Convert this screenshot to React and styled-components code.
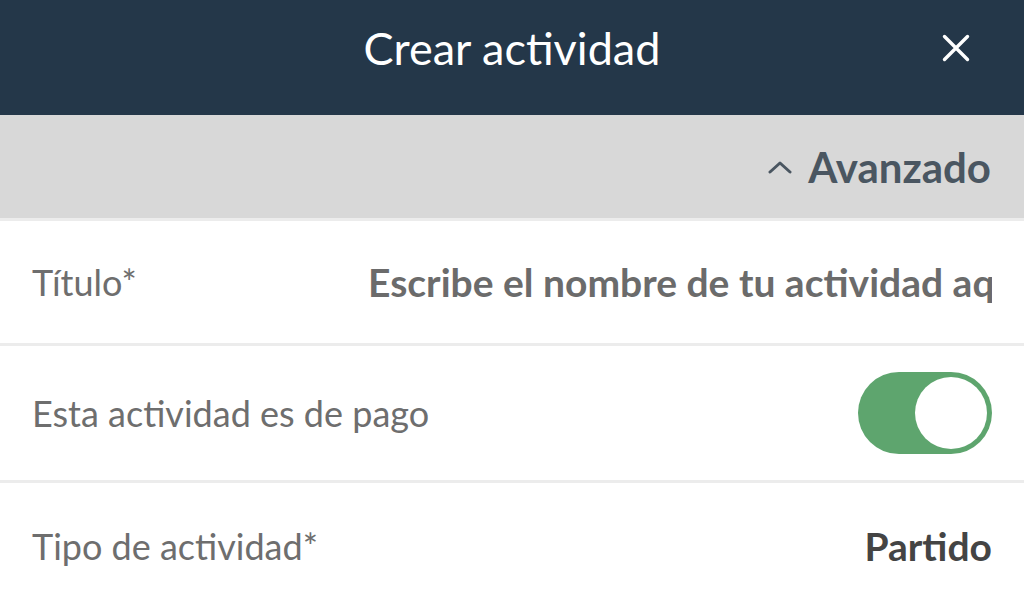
import React from 'react';
import styled, {createGlobalStyle} from 'styled-components';

const Global = createGlobalStyle`
  html, body {
    margin: 0;
    padding: 0;
    background: #ffffff;
    font-family: Lato, "Open Sans", sans-serif;
  }
`;

const Page = styled.div`
  width: 1024px;
  height: 592px;
  overflow: hidden;
  display: flex;
  flex-direction: column;
`;

const Header = styled.header`
  height: 115px;
  flex-shrink: 0;
  background: #243749;
  display: grid;
  grid-template-columns: 1fr auto 1fr;
  align-items: start;
  padding: 0 32px;
  box-sizing: border-box;
`;

const Title = styled.h1`
  grid-column: 2;
  margin: 0;
  padding-top: 22px;
  font-size: 45px;
  font-weight: 400;
  line-height: 52px;
  color: #ffffff;
`;

const Close = styled.button`
  grid-column: 3;
  justify-self: end;
  margin-top: 28px;
  margin-right: 16px;
  width: 40px;
  height: 40px;
  padding: 0;
  border: 0;
  background: none;
  display: flex;
  align-items: center;
  justify-content: center;
`;

const Advanced = styled.div`
  height: 103px;
  flex-shrink: 0;
  background: #d8d8d8;
  border-bottom: 3px solid #ececec;
  display: flex;
  align-items: center;
  justify-content: flex-end;
  gap: 16px;
  padding: 0 33px 0 0;
  font-size: 42px;
  font-weight: 700;
  color: #4a5661;
`;

const Row = styled.div`
  height: ${p => p.$h}px;
  flex-shrink: 0;
  display: flex;
  align-items: center;
  justify-content: space-between;
  gap: 40px;
  padding: 0 32px;
  border-bottom: 3px solid #ececec;
  box-sizing: border-box;
`;

const Label = styled.span`
  flex-shrink: 0;
  font-size: 36px;
  color: #6e6e6e;
`;

const Value = styled.span`
  font-size: 39px;
  font-weight: 700;
  color: ${p => (p.$dark ? '#444444' : '#6b6b6b')};
  white-space: nowrap;
  overflow: hidden;
  min-width: 0;
  max-width: ${p => p.$max || 'none'};
`;

const Toggle = styled.div`
  width: 134px;
  height: 82px;
  border-radius: 41px;
  background: #5ea56e;
  display: flex;
  align-items: center;
  justify-content: flex-end;
  padding: 5px;
  box-sizing: border-box;
`;

const Knob = styled.div`
  width: 72px;
  height: 72px;
  border-radius: 50%;
  background: #ffffff;
`;

export default function App() {
  return (
    <Page>
      <Global />
      <Header>
        <Title>Crear actividad</Title>
        <Close aria-label="Cerrar">
          <svg width="28" height="28" viewBox="0 0 28 28">
            <path d="M2.5 2.5 L25.5 25.5 M25.5 2.5 L2.5 25.5" stroke="#fff" strokeWidth="3.4" strokeLinecap="round" />
          </svg>
        </Close>
      </Header>
      <Advanced>
        <svg width="24" height="14" viewBox="0 0 24 14">
          <path d="M2 12 L12 3 L22 12" fill="none" stroke="#4a5661" strokeWidth="3" strokeLinecap="round" strokeLinejoin="round" />
        </svg>
        Avanzado
      </Advanced>
      <Row $h={125}>
        <Label>Título*</Label>
        <Value $max="624px">Escribe el nombre de tu actividad aquí</Value>
      </Row>
      <Row $h={137}>
        <Label>Esta actividad es de pago</Label>
        <Toggle>
          <Knob />
        </Toggle>
      </Row>
      <Row $h={128}>
        <Label>Tipo de actividad*</Label>
        <Value $dark>Partido</Value>
      </Row>
    </Page>
  );
}
